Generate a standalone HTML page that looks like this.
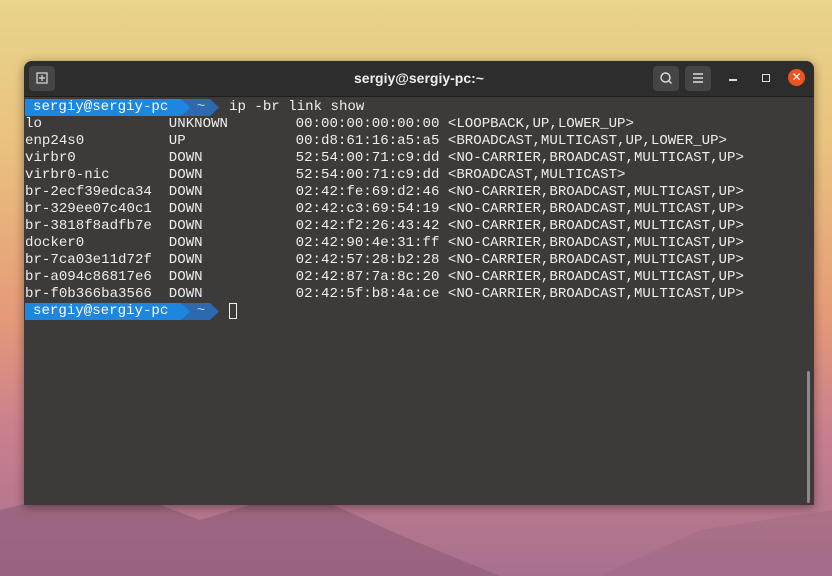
<!DOCTYPE html>
<html><head><meta charset="utf-8"><style>
body{margin:0;width:832px;height:576px;overflow:hidden;position:relative;
background:linear-gradient(180deg,#e8d48a 0%,#eac27e 25%,#e59a78 55%,#c97f8e 75%,#a8708e 100%);font-family:"Liberation Sans",sans-serif}
.mtn{position:absolute;left:0;top:490px;width:832px;height:86px}
.win{position:absolute;left:24px;top:61px;width:790px;height:444px;background:#3c3b39;border-radius:8px 8px 0 0;box-shadow:0 2px 10px rgba(0,0,0,.4);overflow:hidden}
.tb{height:35px;background:#2d2d2d;position:relative;border-bottom:1px solid #1e1e1e}
.title{position:absolute;left:0;right:0;top:9px;text-align:center;color:#eee;font-weight:bold;font-size:14px}
.btn{position:absolute;top:5px;width:26px;height:25px;background:#454545;border-radius:4px}
.term{position:absolute;top:38px;left:1px;font-family:"Liberation Mono",monospace;font-size:14.1px;line-height:17px;color:#eeeeec;white-space:pre}
.pr{display:inline-block;position:relative;width:204px;height:17px;vertical-align:top}
.a1{position:absolute;left:0;top:0;width:165px;height:17px;background:#1d87e0;color:#fff;clip-path:polygon(0 0,156px 0,165px 50%,156px 100%,0 100%);padding-left:8px;box-sizing:border-box;z-index:2}
.a2{position:absolute;left:150px;top:0;width:44px;height:17px;background:#2d69b0;color:#ccc;clip-path:polygon(0 0,35px 0,44px 50%,35px 100%,0 100%);text-align:center;padding-left:8px;box-sizing:border-box}
.sb{position:absolute;right:4px;top:310px;width:3px;height:132px;background:#8a8a8a;border-radius:2px}
</style></head><body>
<svg class="mtn" viewBox="0 0 832 86" preserveAspectRatio="none"><path d="M0 20 L60 5 L120 0 L200 30 L300 0 L400 45 L500 86 L0 86Z" fill="#93607a" opacity=".7"/><path d="M600 86 L700 40 L832 20 L832 86Z" fill="#a06a82" opacity=".5"/></svg>
<div class="win">
<div class="tb">
<div class="btn" style="left:5px"><svg width="26" height="25"><rect x="8" y="7" width="10" height="10" fill="none" stroke="#ddd" stroke-width="1.2"/><path d="M13 9v6M10 12h6" stroke="#ddd" stroke-width="1.2"/></svg></div>
<div class="title">sergiy@sergiy-pc:~</div>
<div class="btn" style="left:629px"><svg width="26" height="25"><circle cx="12.5" cy="11.5" r="4.5" fill="none" stroke="#ddd" stroke-width="1.4"/><path d="M15.5 14.5l3 3" stroke="#ddd" stroke-width="1.4"/></svg></div>
<div class="btn" style="left:661px"><svg width="26" height="25"><path d="M8 8h10M8 12h10M8 16h10" stroke="#ddd" stroke-width="1.4"/></svg></div>
<div style="position:absolute;left:705px;top:18px;width:8px;height:1.5px;background:#ddd"></div>
<div style="position:absolute;left:738px;top:13px;width:6px;height:6px;border:1.3px solid #ddd"></div>
<div style="position:absolute;left:764px;top:8px;width:17px;height:17px;border-radius:50%;background:#e95420;color:#fff;font-size:12px;line-height:17px;text-align:center">✕</div>
</div>
<div class="term"><span class="pr"><span class="a1">sergiy@sergiy-pc</span><span class="a2">~</span></span>ip -br link show
lo               UNKNOWN        00:00:00:00:00:00 &lt;LOOPBACK,UP,LOWER_UP&gt;
enp24s0          UP             00:d8:61:16:a5:a5 &lt;BROADCAST,MULTICAST,UP,LOWER_UP&gt;
virbr0           DOWN           52:54:00:71:c9:dd &lt;NO-CARRIER,BROADCAST,MULTICAST,UP&gt;
virbr0-nic       DOWN           52:54:00:71:c9:dd &lt;BROADCAST,MULTICAST&gt;
br-2ecf39edca34  DOWN           02:42:fe:69:d2:46 &lt;NO-CARRIER,BROADCAST,MULTICAST,UP&gt;
br-329ee07c40c1  DOWN           02:42:c3:69:54:19 &lt;NO-CARRIER,BROADCAST,MULTICAST,UP&gt;
br-3818f8adfb7e  DOWN           02:42:f2:26:43:42 &lt;NO-CARRIER,BROADCAST,MULTICAST,UP&gt;
docker0          DOWN           02:42:90:4e:31:ff &lt;NO-CARRIER,BROADCAST,MULTICAST,UP&gt;
br-7ca03e11d72f  DOWN           02:42:57:28:b2:28 &lt;NO-CARRIER,BROADCAST,MULTICAST,UP&gt;
br-a094c86817e6  DOWN           02:42:87:7a:8c:20 &lt;NO-CARRIER,BROADCAST,MULTICAST,UP&gt;
br-f0b366ba3566  DOWN           02:42:5f:b8:4a:ce &lt;NO-CARRIER,BROADCAST,MULTICAST,UP&gt;
<span class="pr"><span class="a1">sergiy@sergiy-pc</span><span class="a2">~</span></span><span style="outline:1px solid #eee;outline-offset:-1px"> </span></div>
<div class="sb"></div>
</div>
</body></html>
